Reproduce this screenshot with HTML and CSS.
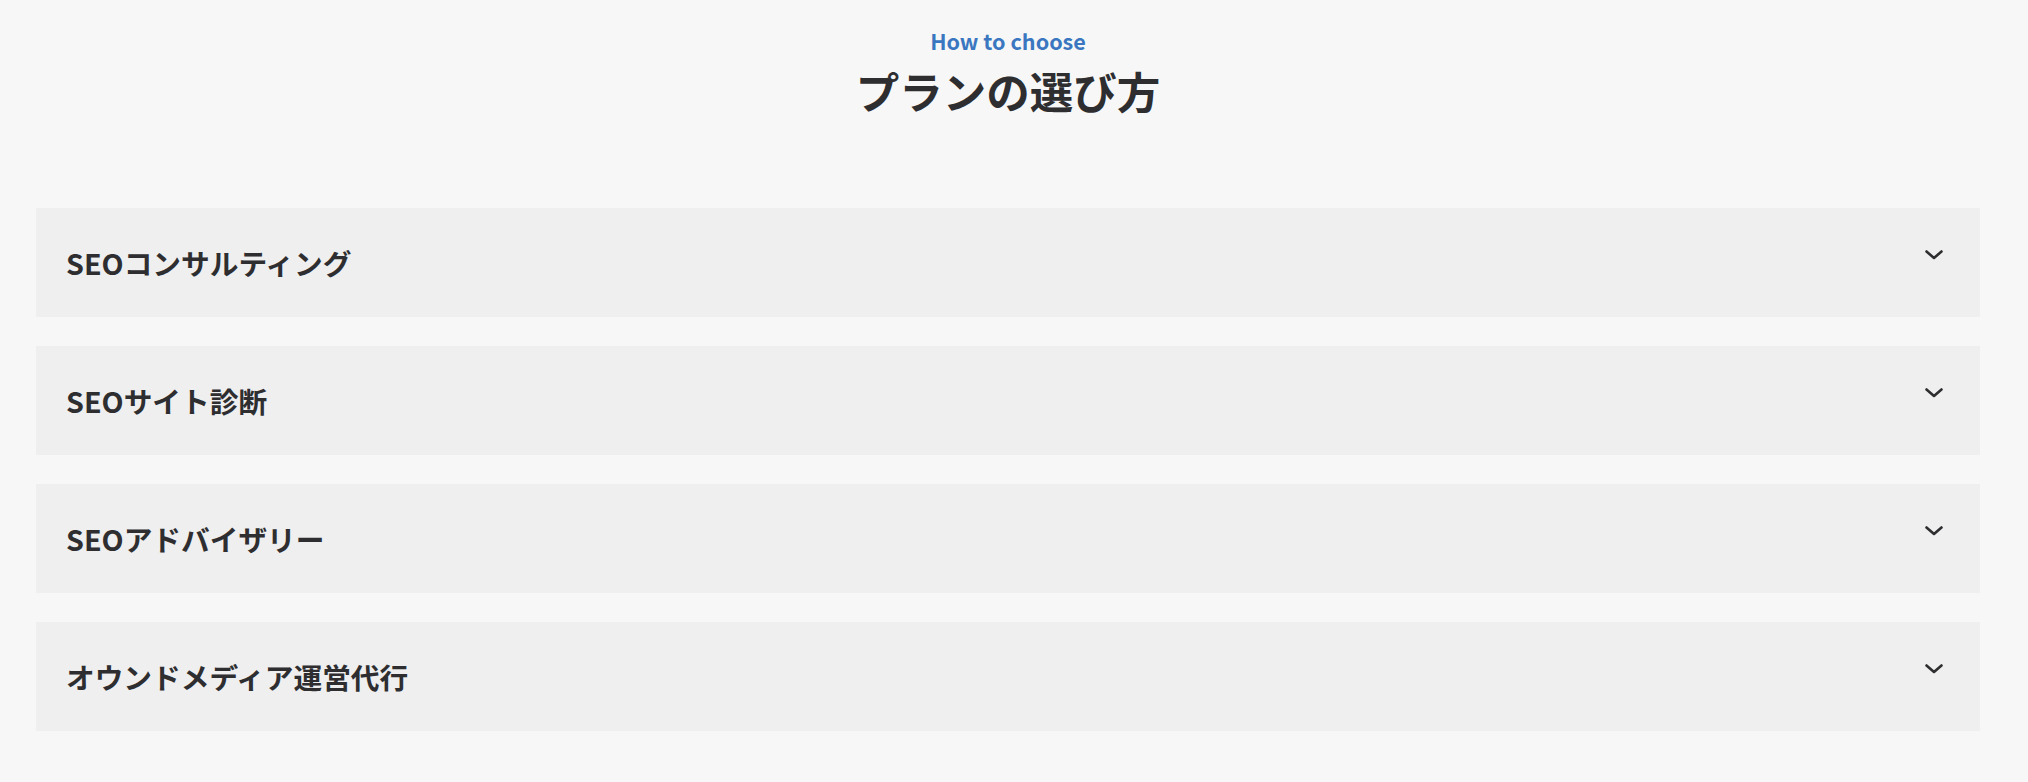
FILE: index.html
```html
<!DOCTYPE html>
<html lang="ja">
<head>
<meta charset="utf-8">
<title>プランの選び方</title>
<link rel="stylesheet" href="styles.css">
</head>
<body>
<section class="choose">
  <header class="choose-head">
    <p class="choose-sub">How to choose</p>
    <h2 class="choose-title">プランの選び方</h2>
  </header>
  <div class="accordion">
    <div class="acc-item">
      <span class="acc-label">SEOコンサルティング</span>
      <svg class="acc-icon" width="18" height="10" viewBox="0 0 18 10"><path d="M1.5 1.5 L9 8 L16.5 1.5" fill="none" stroke="#2e2e31" stroke-width="2.6" stroke-linecap="round" stroke-linejoin="round"/></svg>
    </div>
    <div class="acc-item">
      <span class="acc-label">SEOサイト診断</span>
      <svg class="acc-icon" width="18" height="10" viewBox="0 0 18 10"><path d="M1.5 1.5 L9 8 L16.5 1.5" fill="none" stroke="#2e2e31" stroke-width="2.6" stroke-linecap="round" stroke-linejoin="round"/></svg>
    </div>
    <div class="acc-item">
      <span class="acc-label">SEOアドバイザリー</span>
      <svg class="acc-icon" width="18" height="10" viewBox="0 0 18 10"><path d="M1.5 1.5 L9 8 L16.5 1.5" fill="none" stroke="#2e2e31" stroke-width="2.6" stroke-linecap="round" stroke-linejoin="round"/></svg>
    </div>
    <div class="acc-item">
      <span class="acc-label">オウンドメディア運営代行</span>
      <svg class="acc-icon" width="18" height="10" viewBox="0 0 18 10"><path d="M1.5 1.5 L9 8 L16.5 1.5" fill="none" stroke="#2e2e31" stroke-width="2.6" stroke-linecap="round" stroke-linejoin="round"/></svg>
    </div>
  </div>
</section>
</body>
</html>
```

FILE: styles.css
```css
html, body {
  margin: 0;
  padding: 0;
  background: #f7f7f7;
}
body {
  font-family: "Noto Sans CJK JP", "Noto Sans", sans-serif;
  color: #2e2e31;
}
.choose {
  padding: 26px 48px 0 36px;
}
.choose-head {
  text-align: center;
}
.choose-sub {
  margin: 0;
  font-size: 21.6px;
  line-height: 30px;
  font-weight: 700;
  color: #3a77c0;
}
.choose-title {
  margin: 3px 0 0;
  font-size: 43.5px;
  line-height: 63px;
  font-weight: 700;
}
.accordion {
  margin-top: 86px;
  display: flex;
  flex-direction: column;
  gap: 29px;
}
.acc-item {
  display: flex;
  justify-content: space-between;
  align-items: flex-start;
  background: #efefef;
  padding: 34px 37px 33px 30px;
}
.acc-label {
  font-size: 28.7px;
  line-height: 42px;
  font-weight: 700;
}
.acc-icon {
  margin-top: 8px;
  display: block;
}
```
